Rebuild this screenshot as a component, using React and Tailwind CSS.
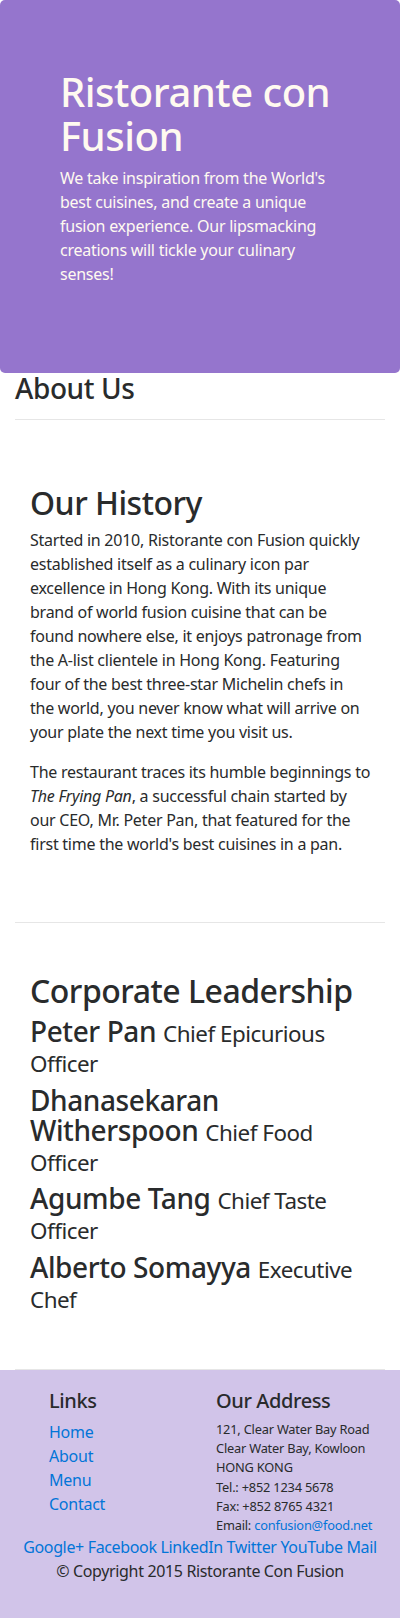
function Lines({ lines }) {
  return lines.map((l, i) => (
    <span key={i}>
      {l}
      {i < lines.length - 1 ? <br /> : null}
    </span>
  ));
}

const leaders = [
  { name: ['Peter Pan'], title: ['Chief Epicurious', 'Officer'] },
  { name: ['Dhanasekaran', 'Witherspoon'], title: ['Chief Food', 'Officer'] },
  { name: ['Agumbe Tang'], title: ['Chief Taste', 'Officer'] },
  { name: ['Alberto Somayya'], title: ['Executive', 'Chef'] },
];

export default function App() {
  return (
    <div
      className="w-[400px] bg-white text-[#292b2c] text-[16px] leading-[24px]"
      style={{ fontFamily: '"Noto Sans", "Open Sans", sans-serif' }}
    >
      {/* Jumbotron */}
      <header className="bg-[#9575CD] text-[#FFFAF0] rounded-[5px] pt-[70px] pb-[71px] px-[60px]">
        <h1 className="text-[40px] leading-[44px] font-medium mb-[8px] tracking-[-0.5px] whitespace-nowrap">
          Ristorante con
          <br />
          Fusion
        </h1>
        <p className="mb-[16px] tracking-[-0.25px] whitespace-nowrap">
          <Lines
            lines={[
              "We take inspiration from the World's",
              'best cuisines, and create a unique',
              'fusion experience. Our lipsmacking',
              'creations will tickle your culinary',
              'senses!',
            ]}
          />
        </p>
      </header>

      {/* About Us header */}
      <div className="px-[15px]">
        <h3 className="text-[28px] leading-[30.8px] font-medium tracking-[-0.4px]">About Us</h3>
        <div className="mt-[15px] border-t border-[#e6e6e6]" />
      </div>

      {/* Our History */}
      <section className="mx-[15px] mt-[15px] pt-[50px] pb-[50px] px-[15px] border-b border-[#e6e6e6]">
        <h2 className="text-[32px] leading-[35.2px] font-medium mb-[8px] tracking-[-0.5px]">Our History</h2>
        <p className="mb-[16px] tracking-[-0.25px] whitespace-nowrap">
          <Lines
            lines={[
              'Started in 2010, Ristorante con Fusion quickly',
              'established itself as a culinary icon par',
              'excellence in Hong Kong. With its unique',
              'brand of world fusion cuisine that can be',
              'found nowhere else, it enjoys patronage from',
              'the A-list clientele in Hong Kong. Featuring',
              'four of the best three-star Michelin chefs in',
              'the world, you never know what will arrive on',
              'your plate the next time you visit us.',
            ]}
          />
        </p>
        <p className="mb-[16px] tracking-[-0.25px] whitespace-nowrap">
          The restaurant traces its humble beginnings to
          <br />
          <em>The Frying Pan</em>, a successful chain started by
          <br />
          our CEO, Mr. Peter Pan, that featured for the
          <br />
          first time the world's best cuisines in a pan.
        </p>
      </section>

      {/* Corporate Leadership */}
      <section className="mx-[15px] pt-[50px] pb-[49px] px-[15px] border-b border-[#e6e6e6]">
        <h2 className="text-[32px] leading-[35.2px] font-medium mb-[8px] tracking-[-0.5px] whitespace-nowrap">
          Corporate Leadership
        </h2>
        {leaders.map((l) => (
          <h3
            key={l.name.join(' ')}
            className="text-[28px] leading-[30.2px] font-medium mb-[8px] tracking-[-0.4px] whitespace-nowrap"
          >
            <Lines lines={l.name} />{' '}
            <small className="text-[22.4px] leading-none font-normal tracking-[-0.5px]">
              <Lines lines={l.title} />
            </small>
          </h3>
        ))}
      </section>

      {/* Footer */}
      <footer className="bg-[#D1C4E9] pt-[20px] pb-[35px]">
        <div className="flex">
          <div className="w-[216px] pl-[49px]">
            <h5 className="text-[20px] leading-[22px] font-medium mb-[8px] tracking-[-0.4px]">Links</h5>
            <ul className="tracking-[-0.25px]">
              <li><a href="#" className="text-[#0275d8]">Home</a></li>
              <li><a href="#" className="text-[#0275d8]">About</a></li>
              <li><a href="#" className="text-[#0275d8]">Menu</a></li>
              <li><a href="#" className="text-[#0275d8]">Contact</a></li>
            </ul>
          </div>
          <div className="flex-1 pr-[10px]">
            <h5 className="text-[20px] leading-[22px] font-medium mb-[8px] tracking-[-0.4px] whitespace-nowrap">Our Address</h5>
            <address className="not-italic text-[12.8px] leading-[19.2px] tracking-[-0.2px] whitespace-nowrap">
              121, Clear Water Bay Road
              <br />
              Clear Water Bay, Kowloon
              <br />
              HONG KONG
              <br />
              Tel.: +852 1234 5678
              <br />
              Fax: +852 8765 4321
              <br />
              Email: <a href="#" className="text-[#0275d8]">confusion@food.net</a>
            </address>
          </div>
        </div>
        <div className="text-center whitespace-nowrap tracking-[-0.35px]">
          <a href="#" className="text-[#0275d8]">Google+</a>{' '}
          <a href="#" className="text-[#0275d8]">Facebook</a>{' '}
          <a href="#" className="text-[#0275d8]">LinkedIn</a>{' '}
          <a href="#" className="text-[#0275d8]">Twitter</a>{' '}
          <a href="#" className="text-[#0275d8]">YouTube</a>{' '}
          <a href="#" className="text-[#0275d8]">Mail</a>
        </div>
        <div className="text-center whitespace-nowrap tracking-[-0.35px]">
          <p>© Copyright 2015 Ristorante Con Fusion</p>
        </div>
      </footer>
    </div>
  );
}
